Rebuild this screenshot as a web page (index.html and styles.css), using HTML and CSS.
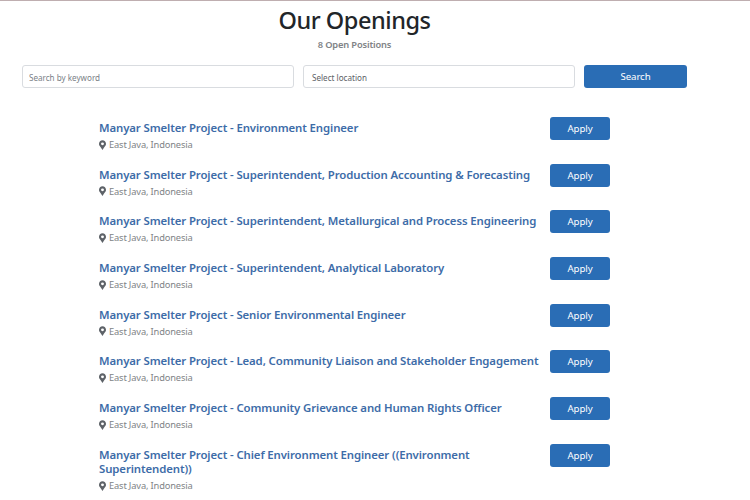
FILE: index.html
```
<!DOCTYPE html>
<html lang="en">
<head>
    <meta charset="UTF-8">
    <title>Our Openings</title>
    <link rel="stylesheet" href="styles.css">
</head>
<body>
    <svg width="0" height="0" class="sprite">
        <symbol id="pin" viewBox="0 0 384 512">
            <path d="M172 502C27 291 0 270 0 192 0 86 86 0 192 0s192 86 192 192c0 78-27 99-172 310-10 13-30 13-40 0zM192 272a80 80 0 1 0 0-160 80 80 0 0 0 0 160z"/>
        </symbol>
    </svg>

    <header class="heading">
        <h1>Our Openings</h1>
        <p>8 Open Positions</p>
    </header>

    <form class="search-form">
        <input type="text" placeholder="Search by keyword">
        <div class="select">Select location</div>
        <button type="button">Search</button>
    </form>

    <div class="jobs">
        <div class="job">
            <div class="job-info">
                <h2>Manyar Smelter Project - Environment Engineer</h2>
                <p><svg><use href="#pin"/></svg>East Java, Indonesia</p>
            </div>
            <button type="button">Apply</button>
        </div>
        <div class="job">
            <div class="job-info">
                <h2>Manyar Smelter Project - Superintendent, Production Accounting &amp; Forecasting</h2>
                <p><svg><use href="#pin"/></svg>East Java, Indonesia</p>
            </div>
            <button type="button">Apply</button>
        </div>
        <div class="job">
            <div class="job-info">
                <h2>Manyar Smelter Project - Superintendent, Metallurgical and Process Engineering</h2>
                <p><svg><use href="#pin"/></svg>East Java, Indonesia</p>
            </div>
            <button type="button">Apply</button>
        </div>
        <div class="job">
            <div class="job-info">
                <h2>Manyar Smelter Project - Superintendent, Analytical Laboratory</h2>
                <p><svg><use href="#pin"/></svg>East Java, Indonesia</p>
            </div>
            <button type="button">Apply</button>
        </div>
        <div class="job">
            <div class="job-info">
                <h2>Manyar Smelter Project - Senior Environmental Engineer</h2>
                <p><svg><use href="#pin"/></svg>East Java, Indonesia</p>
            </div>
            <button type="button">Apply</button>
        </div>
        <div class="job">
            <div class="job-info">
                <h2>Manyar Smelter Project - Lead, Community Liaison and Stakeholder Engagement</h2>
                <p><svg><use href="#pin"/></svg>East Java, Indonesia</p>
            </div>
            <button type="button">Apply</button>
        </div>
        <div class="job">
            <div class="job-info">
                <h2>Manyar Smelter Project - Community Grievance and Human Rights Officer</h2>
                <p><svg><use href="#pin"/></svg>East Java, Indonesia</p>
            </div>
            <button type="button">Apply</button>
        </div>
        <div class="job">
            <div class="job-info">
                <h2>Manyar Smelter Project - Chief Environment Engineer ((Environment<br>Superintendent))</h2>
                <p><svg><use href="#pin"/></svg>East Java, Indonesia</p>
            </div>
            <button type="button">Apply</button>
        </div>
    </div>
</body>
</html>
```

FILE: styles.css
```
* {
    box-sizing: border-box;
}
body {
    font-family: "Noto Sans", sans-serif;
    margin: 0;
    height: 500px;
    overflow: hidden;
    background-color: #fff;
    border-top: 1px solid #bfaeb0;
}
h1, h2, p {
    margin: 0;
}
.sprite {
    display: block;
}
.heading {
    width: 709px;
    text-align: center;
}
.heading h1 {
    margin-top: 5px;
    font-size: 23.5px;
    line-height: 29px;
    font-weight: 500;
    letter-spacing: -0.45px;
    color: #212529;
}
.heading p {
    margin-top: 3px;
    font-size: 9.3px;
    line-height: 14px;
    font-weight: 600;
    letter-spacing: -0.15px;
    color: #808386;
}
button {
    flex-shrink: 0;
    height: 23px;
    padding: 0;
    border: none;
    border-radius: 3px;
    background-color: #2a6db5;
    color: #fff;
    font-family: inherit;
    font-size: 9.7px;
    line-height: 23px;
    letter-spacing: -0.1px;
}
.search-form {
    display: flex;
    gap: 9px;
    margin: 13px 0 0 22px;
}
.search-form input,
.search-form .select {
    width: 272px;
    height: 23px;
    padding: 2px 7px 0;
    border: 1px solid #d9dce0;
    border-radius: 3px;
    background-color: #fff;
    font-family: inherit;
    font-size: 8.1px;
    line-height: 20px;
    color: #5c6166;
}
.search-form input {
    padding-left: 6px;
}
.search-form .select {
    padding-left: 8px;
}
.search-form input::placeholder {
    color: #7b8187;
}
.search-form button {
    width: 103px;
}
.jobs {
    width: 511px;
    margin: 29px 0 0 99px;
}
.job {
    display: flex;
    justify-content: space-between;
    align-items: flex-start;
    margin-bottom: 10.7px;
}
.job-info {
    padding-top: 4px;
    white-space: nowrap;
}
.job h2 {
    margin-bottom: 0.6px;
    font-size: 11.4px;
    line-height: 14.4px;
    font-weight: 600;
    letter-spacing: -0.11px;
    color: #3d6ca8;
}
.job p {
    display: flex;
    align-items: center;
    gap: 3px;
    font-size: 9.3px;
    line-height: 17px;
    letter-spacing: -0.15px;
    color: #808386;
}
.job svg {
    width: 7px;
    height: 10px;
    fill: #5d6268;
}
.job button {
    width: 60px;
}
```
